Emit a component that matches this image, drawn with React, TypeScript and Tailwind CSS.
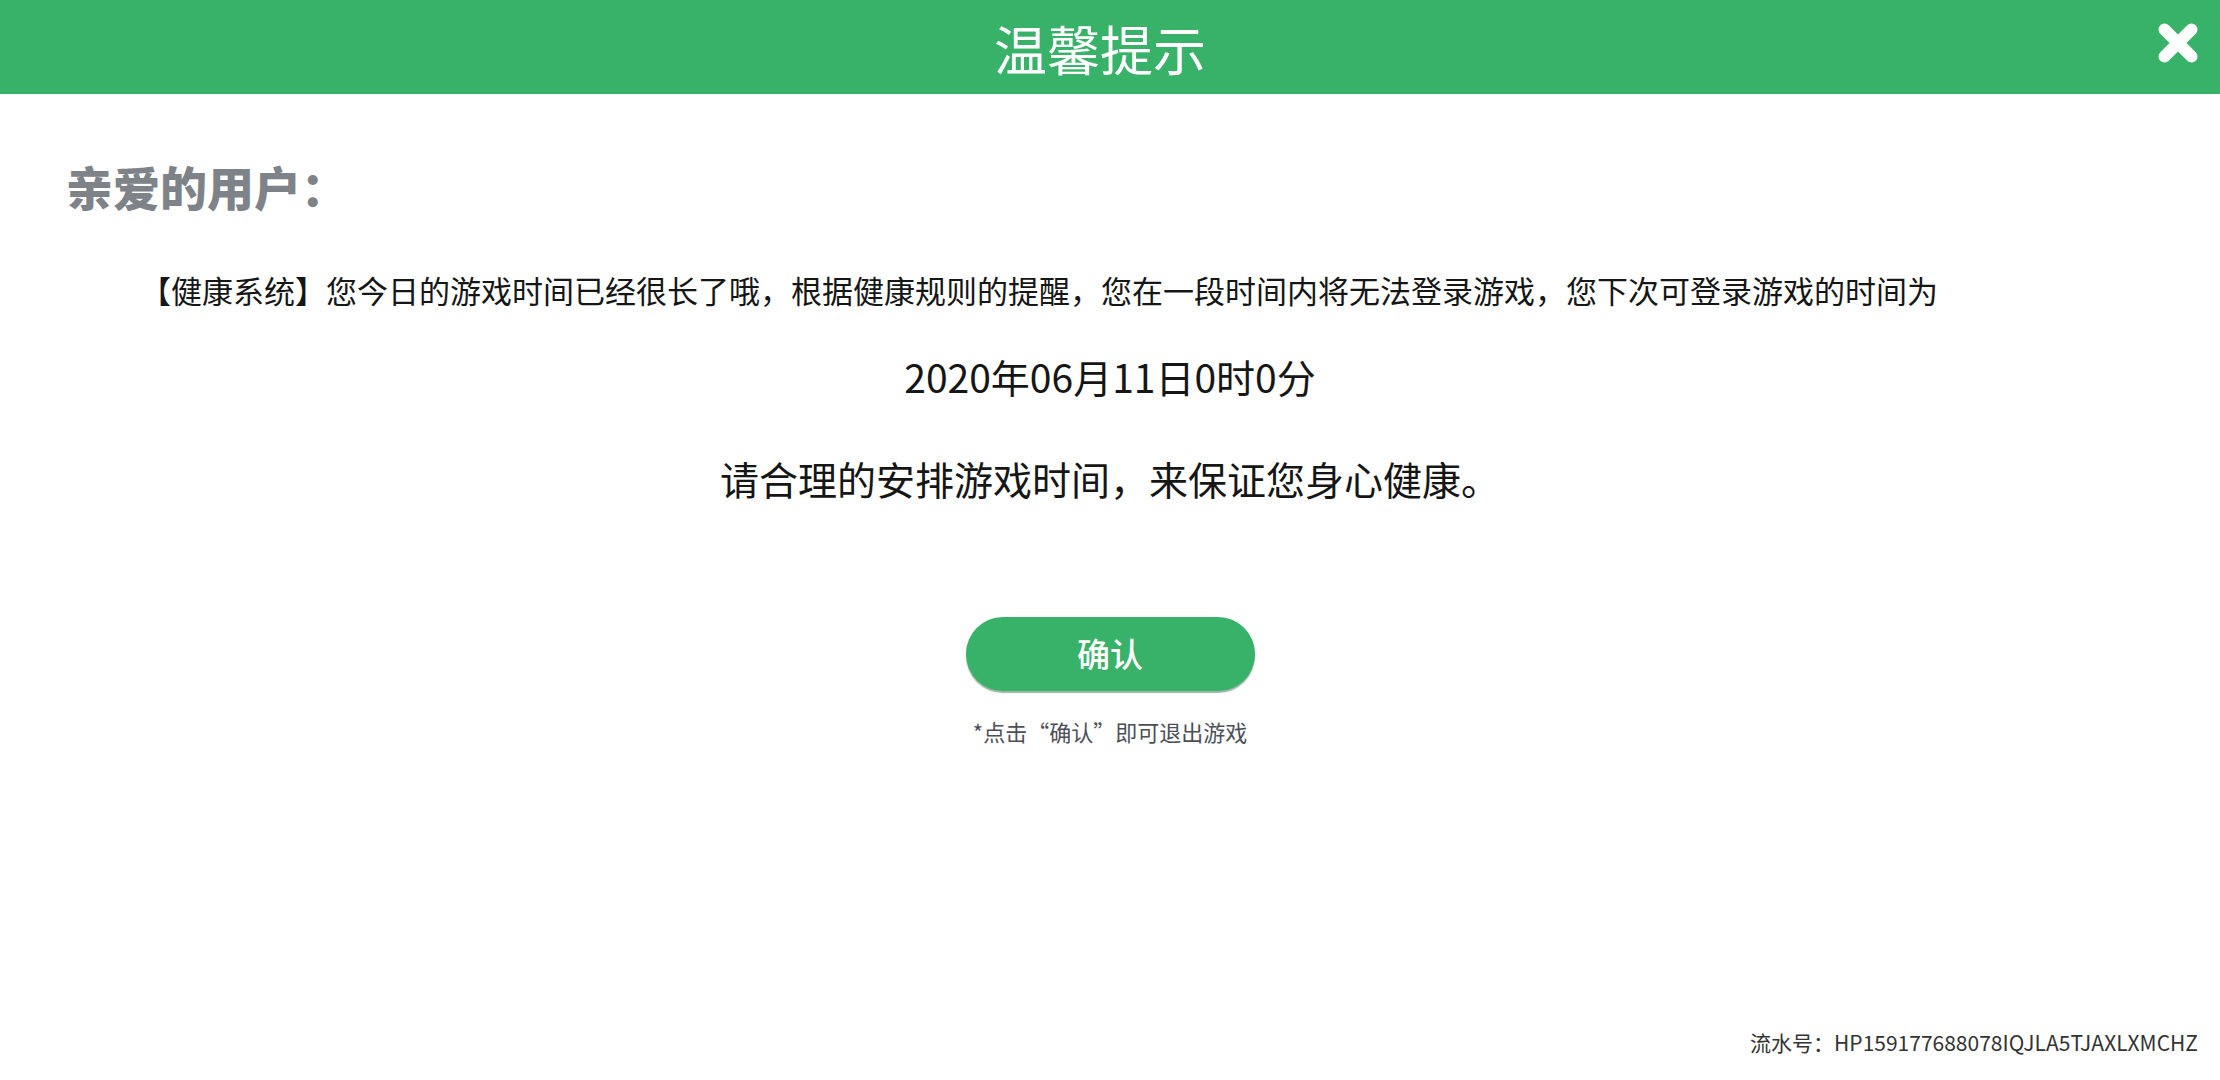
export default function App() {
  return (
    <div className="flex min-h-screen flex-col bg-white font-['Noto_Sans_CJK_SC','Noto_Sans',sans-serif] text-[#161616]">
      <header className="grid grid-cols-[1fr_auto_1fr] bg-[#38b268] pt-2 pr-5 pb-[6px] text-white">
        <h1 className="col-start-2 text-[53px] leading-[80px] font-normal">温馨提示</h1>
        <button type="button" aria-label="关闭" className="mt-[13px] cursor-pointer self-start justify-self-end">
          <svg viewBox="0 0 44 44" className="size-11" fill="none" stroke="currentColor" strokeWidth="12" strokeLinecap="round">
            <path d="M8.500 8.500 35.500 35.500M35.500 8.500 8.500 35.500" />
          </svg>
        </button>
      </header>

      <main className="flex flex-1 flex-col">
        <h2 className="mt-[60px] pl-[66px] text-[47px] leading-[64px] font-black text-[#7e8389]">亲爱的用户：</h2>
        <p className="mt-[48px] pr-20 pl-[140px] text-[31px] leading-[48px]">
          【健康系统】您今日的游戏时间已经很长了哦，根据健康规则的提醒，您在一段时间内将无法登录游戏，您下次可登录游戏的时间为
        </p>
        <p className="mt-[34px] text-center text-[39px] leading-[56px]">2020年06月11日0时0分</p>
        <p className="mt-[46px] text-center text-[39px] leading-[56px]">请合理的安排游戏时间，来保证您身心健康。</p>
        <div className="mt-[111px] flex flex-col items-center">
          <button
            type="button"
            className="h-[74px] w-[289px] cursor-pointer rounded-full bg-[#38b268] text-[33px] font-medium text-white shadow-[0_2px_1px_#9db5a6]"
          >
            确认
          </button>
          <p className="mt-6 text-[22px] leading-8 text-[#4d4f58]">*点击“确认”即可退出游戏</p>
        </div>
      </main>

      <footer className="pr-[22px] pb-[22px] text-right text-[21px] leading-8 text-[#333333]">
        流水号：HP159177688078IQJLA5TJAXLXMCHZ
      </footer>
    </div>
  );
}
